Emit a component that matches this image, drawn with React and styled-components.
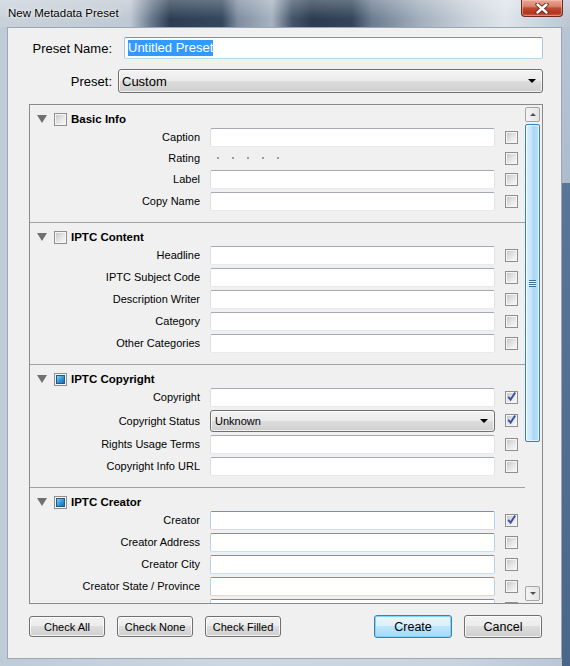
import React from 'react'
import styled, { createGlobalStyle, css } from 'styled-components'

const GlobalStyle = createGlobalStyle`
  html, body {
    margin: 0;
    padding: 0;
    background: #5f7590;
  }
  body {
    font-family: "Liberation Sans", Arial, sans-serif;
    color: #000;
  }
`

// last creator row is scrolled half out of view, its label sits below the fold
const sections = [
  {
    title: 'Basic Info',
    rows: [
      { label: 'Caption' },
      { label: 'Rating', kind: 'rating' },
      { label: 'Label' },
      { label: 'Copy Name' },
    ],
  },
  {
    title: 'IPTC Content',
    rows: [
      { label: 'Headline' },
      { label: 'IPTC Subject Code' },
      { label: 'Description Writer' },
      { label: 'Category' },
      { label: 'Other Categories' },
    ],
  },
  {
    title: 'IPTC Copyright',
    mixed: true,
    rows: [
      { label: 'Copyright', checked: true },
      { label: 'Copyright Status', kind: 'select', value: 'Unknown', checked: true },
      { label: 'Rights Usage Terms' },
      { label: 'Copyright Info URL' },
    ],
  },
  {
    title: 'IPTC Creator',
    mixed: true,
    hot: true,
    rows: [
      { label: 'Creator', checked: true },
      { label: 'Creator Address' },
      { label: 'Creator City' },
      { label: 'Creator State / Province' },
      { label: '' },
    ],
  },
]

const Window = styled.div`
  width: 570px;
  height: 666px;
  box-sizing: border-box;
  display: flex;
  flex-direction: column;
  padding: 0 8px 7px 7px;
  background:
    linear-gradient(to bottom, #b9c7d5 0, #adbccb 183px, #5b7694 183px, #4b6787 100%) right top / 8px 100% no-repeat,
    linear-gradient(to right, #bfcbd7, #ccd7e1 40%, #c9d4df 80%, #b9c6d3);
`

const TitleBar = styled.div`
  height: 27px;
  margin: 0 -8px 0 -7px;
  padding-left: 8px;
  display: flex;
  justify-content: space-between;
  align-items: flex-start;
  background:
    linear-gradient(to bottom, rgba(255, 255, 255, 0.25), rgba(255, 255, 255, 0) 70%),
    linear-gradient(
      to right,
      #c9d2db 0,
      #bfc9d3 130px,
      #66778b 152px,
      #2d3e54 170px,
      #34475d 222px,
      #7f8ea0 238px,
      #a7b3c0 272px,
      #45566b 292px,
      #2b3c51 312px,
      #33455b 352px,
      #6c7d91 372px,
      #a2afbd 420px,
      #cbd3dc 470px,
      #dfe5eb 505px,
      #bcc7d2 570px
    );
`

const Title = styled.div`
  margin-top: 7px;
  font-size: 11.5px;
  color: #000;
  text-shadow: 0 0 6px rgba(255, 255, 255, 0.9), 0 0 2px rgba(255, 255, 255, 0.9);
`

const CloseButton = styled.div`
  width: 42px;
  height: 17px;
  margin-right: 7px;
  box-sizing: border-box;
  border: 1px solid #6b2a1f;
  border-top: none;
  border-radius: 0 0 4px 4px;
  background: linear-gradient(to bottom, #e9a794 0, #d9826c 40%, #c24a33 50%, #b3361f 80%, #c9573d 100%);
  box-shadow: inset 0 0 0 1px rgba(255, 210, 200, 0.45);
  display: flex;
  align-items: center;
  justify-content: center;
`

const Client = styled.div`
  flex: 1;
  display: flex;
  flex-direction: column;
  border: 1px solid #9aa8b6;
  background: #f0f0f0;
  padding: 9px 18px 20px 21px;
`

const FormRow = styled.div`
  display: flex;
  align-items: center;
  margin-bottom: ${({ $gap }) => $gap}px;
`

const FormLabel = styled.div`
  width: 83px;
  text-align: right;
  font-size: 13px;
  white-space: nowrap;
`

const NameField = styled.div`
  flex: 1;
  height: 22px;
  margin-left: 12px;
  box-sizing: border-box;
  border: 1px solid;
  border-color: #5d9ad0 #a4c9e3 #b7d9ed #a4c9e3;
  border-radius: 2px;
  background: #fff;
  padding-left: 3px;
  display: flex;
  align-items: center;
  font-size: 13px;
`

const Selected = styled.span`
  background: #3399ff;
  color: #fff;
  line-height: 16px;
`

const dropStyle = css`
  box-sizing: border-box;
  border: 1px solid #707070;
  border-radius: 3px;
  background: linear-gradient(to bottom, #f3f3f3 0, #ebebeb 50%, #dddddd 50%, #cfcfcf 100%);
  box-shadow: inset 0 0 0 1px rgba(255, 255, 255, 0.7);
  display: flex;
  align-items: center;
  justify-content: space-between;
`

const PresetSelect = styled.div`
  ${dropStyle}
  flex: 1;
  height: 24px;
  margin-left: 6px;
  padding: 0 6px 0 3px;
  font-size: 13px;
`

const Arrow = styled.span`
  width: 0;
  height: 0;
  border-left: 4px solid transparent;
  border-right: 4px solid transparent;
  border-top: 4px solid #000;
`

const Panel = styled.div`
  height: 500px;
  box-sizing: border-box;
  border: 1px solid #8a8a8a;
  display: flex;
  background: #f0f0f0;
`

const ScrollArea = styled.div`
  flex: 0 0 495px;
  overflow: hidden;
`

const Section = styled.div`
  padding: 7px 0 10px;
  border-bottom: 1px solid #a2a2a2;
`

const SectionHeader = styled.div`
  height: 14px;
  padding-left: 7px;
  display: flex;
  align-items: center;
`

const Twisty = styled.span`
  width: 0;
  height: 0;
  border-left: 5px solid transparent;
  border-right: 5px solid transparent;
  border-top: 8px solid #707070;
  margin-right: 7px;
`

const SectionTitle = styled.span`
  margin-left: 4px;
  font-size: 11.5px;
  font-weight: bold;
  white-space: nowrap;
`

const Row = styled.div`
  height: ${({ $height }) => $height}px;
  display: grid;
  grid-template-columns: 170px 285px 13px;
  column-gap: 10px;
  align-items: center;
`

const RowLabel = styled.div`
  text-align: right;
  font-size: 11px;
  white-space: nowrap;
`

const Field = styled.div`
  height: 19px;
  box-sizing: border-box;
  border: 1px solid;
  border-radius: 2px;
  background: #fff;
  border-color: ${({ $hot }) =>
    $hot ? '#5f98c6 #b3d3ea #c5e0f1 #b3d3ea' : '#a5a9b0 #e0e3e8 #e6eaee #dcdfe4'};
`

const StatusSelect = styled.div`
  ${dropStyle}
  height: 22px;
  padding: 0 6px 0 4px;
  font-size: 11px;
`

const Dots = styled.div`
  display: flex;
  gap: 13px;
  padding-left: 7px;
`

const Dot = styled.span`
  width: 2px;
  height: 2px;
  background: #9c9c9c;
`

const Box = styled.span`
  width: 13px;
  height: 13px;
  box-sizing: border-box;
  border: 1px solid #8e8f8f;
  padding: 1px;
  background: #f5f5f5;
  display: inline-flex;
  flex: 0 0 13px;
`

const BoxFill = styled.span`
  flex: 1;
  position: relative;
  ${({ $mixed }) =>
    $mixed
      ? css`
          border: 1px solid #1d5a8a;
          background: linear-gradient(135deg, #86cdf3 0, #3a9ad8 50%, #1a6aa8 100%);
        `
      : css`
          background: linear-gradient(135deg, #c9c9c9 0, #e4e4e4 50%, #f7f7f7 100%);
        `}
`

const Tick = styled.svg`
  position: absolute;
  left: -1px;
  top: -2px;
`

function CheckBox({ checked, mixed }) {
  return (
    <Box>
      <BoxFill $mixed={mixed}>
        {checked && (
          <Tick width="11" height="11" viewBox="0 0 11 11">
            <path d="M2.2 5.8 L4.6 8.6 L9.2 1.6" fill="none" stroke="#3a50a0" strokeWidth="1.9" />
          </Tick>
        )}
      </BoxFill>
    </Box>
  )
}

const ScrollBar = styled.div`
  width: 15px;
  margin-right: 2px;
  padding: 2px 0;
  box-sizing: border-box;
  display: flex;
  flex-direction: column;
`

const ScrollButton = styled.div`
  height: 15px;
  box-sizing: border-box;
  border: 1px solid #a5a5a5;
  border-radius: 2px;
  background: linear-gradient(to right, #f4f4f4, #e4e4e4);
  display: flex;
  align-items: center;
  justify-content: center;
  &::after {
    content: '';
    border-left: 3px solid transparent;
    border-right: 3px solid transparent;
    ${({ $down }) =>
      $down ? 'border-top: 3px solid #505050;' : 'border-bottom: 3px solid #505050;'}
  }
`

const Thumb = styled.div`
  margin-top: 2px;
  height: 318px;
  box-sizing: border-box;
  border: 1px solid #3c7fb1;
  border-radius: 2px;
  background: linear-gradient(to right, #dff1fc 0, #c4e5f9 40%, #a8d6f5 60%, #bfe2f8 100%);
  box-shadow: inset 0 0 0 1px rgba(255, 255, 255, 0.6);
  display: flex;
  align-items: center;
  justify-content: center;
`

const Grip = styled.span`
  width: 7px;
  height: 7px;
  background: repeating-linear-gradient(to bottom, #3d6d96 0 1px, #e6f4fd 1px 2px);
`

const Spacer = styled.div`
  flex: 1;
`

const ButtonBar = styled.div`
  margin-top: 11px;
  height: 23px;
  display: flex;
  justify-content: space-between;
  align-items: center;
  padding-right: 1px;
`

const ButtonGroup = styled.div`
  display: flex;
  align-items: center;
  gap: 12px;
`

const Button = styled.button`
  font-family: inherit;
  color: #000;
  padding: 0;
  box-sizing: border-box;
  border: 1px solid #707070;
  border-radius: 3px;
  background: linear-gradient(to bottom, #f2f2f2 0, #ebebeb 50%, #dddddd 50%, #cfcfcf 100%);
  box-shadow: inset 0 0 0 1px rgba(255, 255, 255, 0.75);
  width: ${({ $big }) => ($big ? 78 : 76)}px;
  height: ${({ $big }) => ($big ? 23 : 21)}px;
  font-size: ${({ $big }) => ($big ? 12.5 : 11)}px;
  ${({ $primary }) =>
    $primary &&
    css`
      border-color: #3c7fb1;
      background: linear-gradient(to bottom, #e8f6fd 0, #d9f0fc 50%, #bee6fd 50%, #a7d9f5 100%);
      box-shadow: inset 0 0 0 1px #7fd3f7;
    `}
`

function App() {
  return (
    <>
      <GlobalStyle />
      <Window>
        <TitleBar>
          <Title>New Metadata Preset</Title>
          <CloseButton>
            <svg width="14" height="11" viewBox="0 0 14 11">
              <path d="M2.5 1.5 L11.5 9.5 M11.5 1.5 L2.5 9.5" stroke="#5a2418" strokeWidth="4.2" strokeLinecap="round" />
              <path d="M2.5 1.5 L11.5 9.5 M11.5 1.5 L2.5 9.5" stroke="#fff" strokeWidth="2.4" strokeLinecap="round" />
            </svg>
          </CloseButton>
        </TitleBar>

        <Client>
          <FormRow $gap={10}>
            <FormLabel>Preset Name:</FormLabel>
            <NameField>
              <Selected>Untitled Preset</Selected>
            </NameField>
          </FormRow>
          <FormRow $gap={11}>
            <FormLabel>Preset:</FormLabel>
            <PresetSelect>
              <span>Custom</span>
              <Arrow />
            </PresetSelect>
          </FormRow>

          <Panel>
            <ScrollArea>
              {sections.map(section => (
                <Section key={section.title}>
                  <SectionHeader>
                    <Twisty />
                    <CheckBox mixed={section.mixed} />
                    <SectionTitle>{section.title}</SectionTitle>
                  </SectionHeader>
                  {section.rows.map((row, i) => (
                    <Row
                      key={i}
                      $height={row.kind === 'rating' ? 20 : row.kind === 'select' ? 25 : 22}
                    >
                      <RowLabel>{row.label}</RowLabel>
                      {row.kind === 'rating' ? (
                        <Dots>
                          {[1, 2, 3, 4, 5].map(n => (
                            <Dot key={n} />
                          ))}
                        </Dots>
                      ) : row.kind === 'select' ? (
                        <StatusSelect>
                          <span>{row.value}</span>
                          <Arrow />
                        </StatusSelect>
                      ) : (
                        <Field $hot={section.hot} />
                      )}
                      <CheckBox checked={row.checked} />
                    </Row>
                  ))}
                </Section>
              ))}
            </ScrollArea>
            <ScrollBar>
              <ScrollButton />
              <Thumb>
                <Grip />
              </Thumb>
              <Spacer />
              <ScrollButton $down />
            </ScrollBar>
          </Panel>

          <ButtonBar>
            <ButtonGroup>
              <Button>Check All</Button>
              <Button>Check None</Button>
              <Button>Check Filled</Button>
            </ButtonGroup>
            <ButtonGroup>
              <Button $big $primary>
                Create
              </Button>
              <Button $big>Cancel</Button>
            </ButtonGroup>
          </ButtonBar>
        </Client>
      </Window>
    </>
  )
}

export default App
